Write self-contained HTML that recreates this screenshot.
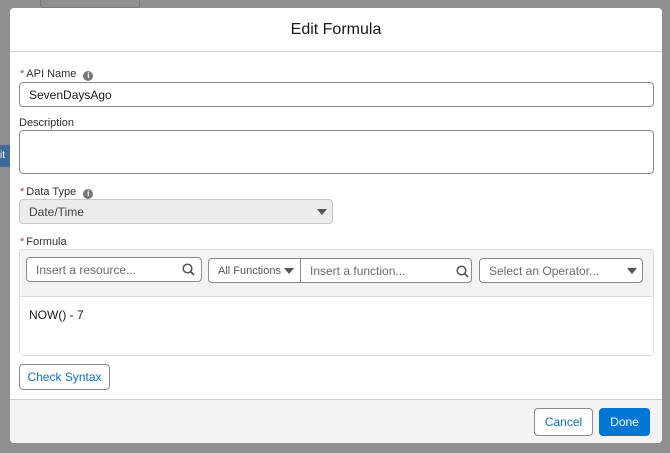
<html><head><style>
body{margin:0;width:670px;height:453px;background:#8f8f8f;position:relative;overflow:hidden;font-family:"Liberation Sans",sans-serif;color:#181818}
.a{position:absolute;box-sizing:border-box}
.m{left:10px;top:8px;width:652px;height:435px;background:#fff;border-radius:4px;overflow:hidden}
.lbl{font-size:11px;color:#2e2e2e}
.req{color:#c23934;margin-right:2px}
.in{border:1px solid #8a8a8a;border-radius:4px;background:#fff;font-size:12px;padding-left:9px;display:flex;align-items:center}
.ph{color:#6b6b6b}
.i{display:inline-block;width:10px;height:10px;border-radius:50%;background:#777;color:#fff;font-size:8px;font-weight:bold;text-align:center;line-height:10px;vertical-align:-1px;margin-left:7px}
.tri{position:absolute;width:0;height:0;border-left:5px solid transparent;border-right:5px solid transparent;border-top:6px solid #555}
</style></head><body>
<div class="a" style="left:40px;top:0;width:100px;height:8px;border:1px solid #7a7a7a;border-top:none;border-radius:0 0 3px 3px"></div>
<div class="a" style="left:0;top:145px;width:10px;height:22px;background:#3f6a9a;color:#fff;font-size:10px;line-height:22px">it</div>
<div class="a m">
 <div class="a" style="left:0;top:0;width:652px;height:44px;border-bottom:1px solid #d0d0d0;text-align:center;font-size:16px;line-height:44px">Edit Formula</div>
 <div class="a lbl" style="left:10px;top:60px"><span class="req">*</span>API Name<span class="i">i</span></div>
 <div class="a in" style="left:9px;top:74px;width:635px;height:25px">SevenDaysAgo</div>
 <div class="a lbl" style="left:9px;top:109px">Description</div>
 <div class="a in" style="left:9px;top:122px;width:635px;height:44px"></div>
 <div class="a lbl" style="left:10px;top:178px"><span class="req">*</span>Data Type<span class="i">i</span></div>
 <div class="a in" style="left:9px;top:191px;width:314px;height:25px;background:#ececec;border-color:#c9c9c9;color:#444">Date/Time<span class="tri" style="left:297px;top:9px"></span></div>
 <div class="a lbl" style="left:10px;top:228px"><span class="req">*</span>Formula</div>
 <div class="a" style="left:9px;top:241px;width:635px;height:107px;border:1px solid #ddd;border-radius:4px;background:#f3f3f3"></div>
 <div class="a" style="left:10px;top:288px;width:633px;height:59px;background:#fff;border-top:1px solid #ddd;font-size:12px;padding:11px 9px">NOW() - 7</div>
 <div class="a in" style="left:16px;top:249px;width:176px;height:25px"><span class="ph">Insert a resource...</span>
  <svg class="a" style="left:155px;top:5px" width="13" height="13" viewBox="0 0 13 13"><circle cx="5.5" cy="5.5" r="4.3" fill="none" stroke="#555" stroke-width="1.5"/><path d="M8.6 8.6L12 12" stroke="#555" stroke-width="1.7"/></svg></div>
 <div class="a in" style="left:198px;top:250px;width:93px;height:25px;border-radius:4px 0 0 4px;font-size:11px"><span class="ph" style="color:#555">All Functions</span><span class="tri" style="left:75px;top:9px"></span></div>
 <div class="a in" style="left:290px;top:250px;width:172px;height:25px;border-radius:0 4px 4px 0"><span class="ph">Insert a function...</span>
  <svg class="a" style="left:155px;top:6px" width="13" height="13" viewBox="0 0 13 13"><circle cx="5.5" cy="5.5" r="4.3" fill="none" stroke="#555" stroke-width="1.5"/><path d="M8.6 8.6L12 12" stroke="#555" stroke-width="1.7"/></svg></div>
 <div class="a in" style="left:469px;top:250px;width:164px;height:25px"><span class="ph">Select an Operator...</span><span class="tri" style="left:147px;top:9px"></span></div>
 <div class="a in" style="left:9px;top:356px;width:91px;height:26px;color:#0b6fd0;justify-content:center;padding:0">Check Syntax</div>
 <div class="a" style="left:0;top:391px;width:652px;height:44px;background:#f3f3f3;border-top:1px solid #d0d0d0"></div>
 <div class="a in" style="left:524px;top:400px;width:59px;height:28px;color:#0b6fd0;justify-content:center;padding:0">Cancel</div>
 <div class="a in" style="left:589px;top:400px;width:51px;height:28px;background:#0176d3;border-color:#0176d3;color:#fff;justify-content:center;padding:0">Done</div>
</div>
</body></html>
